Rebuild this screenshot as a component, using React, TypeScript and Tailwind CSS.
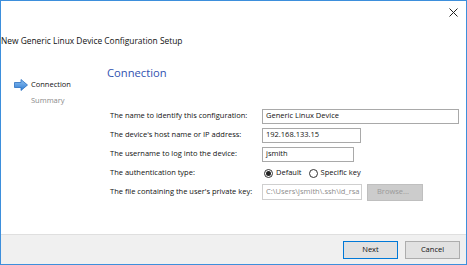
import React from 'react';

const font = { fontFamily: '"Open Sans", "Liberation Sans", sans-serif' };

const ArrowIcon: React.FC = () => (
  <svg width="14" height="12" viewBox="0 0 14 12" className="shrink-0">
    <defs>
      <linearGradient id="arr" x1="0" y1="0" x2="0" y2="1">
        <stop offset="0" stopColor="#8fc0f0" />
        <stop offset="1" stopColor="#2f7dd4" />
      </linearGradient>
    </defs>
    <path d="M0.5 3.5 H7 V0.5 L13.5 6 L7 11.5 V8.5 H0.5 Z" fill="url(#arr)" stroke="#2a6fc0" strokeWidth="0.8" />
  </svg>
);

const Radio: React.FC<{ checked?: boolean; label: string }> = ({ checked, label }) => (
  <div className="flex items-center gap-[3px]">
    <span className="w-[9px] h-[9px] rounded-full border border-[#333] flex items-center justify-center bg-white">
      {checked && <span className="w-[5px] h-[5px] rounded-full bg-[#222]" />}
    </span>
    <span>{label}</span>
  </div>
);

const Row: React.FC<{ label: string; children: React.ReactNode }> = ({ label, children }) => (
  <div className="flex items-center h-[16px]">
    <div className="w-[152px] shrink-0">{label}</div>
    {children}
  </div>
);

export default function App() {
  return (
    <div
      className="w-[467px] h-[265px] border border-[#3d8fdc] bg-white flex flex-col text-[7.5px] text-[#111] overflow-hidden"
      style={font}
    >
      <div className="h-[22px] flex justify-end items-center pr-[8px]">
        <svg width="9" height="9" viewBox="0 0 9 9">
          <path d="M0.5 0.5 L8.5 8.5 M8.5 0.5 L0.5 8.5" stroke="#222" strokeWidth="1" />
        </svg>
      </div>
      <div className="mt-[10px] h-[16px] flex items-center text-[8.4px]">New Generic Linux Device Configuration Setup</div>

      <div className="flex flex-1">
        <div className="w-[105px] shrink-0 pl-[13px] pt-[28px] flex flex-col">
          <div className="h-[16px] flex items-center gap-[3px]">
            <ArrowIcon />
            <span>Connection</span>
          </div>
          <div className="h-[16px] flex items-center pl-[17px] text-[#8a8a8a]">Summary</div>
        </div>

        <div className="flex-1 pt-[16px] pl-[1px]">
          <div className="h-[16px] flex items-center text-[11.2px] text-[#2f52b0]">Connection</div>
          <div className="mt-[27px] flex flex-col gap-[3px] pl-[3px]">
            <Row label="The name to identify this configuration:">
              <div className="w-[197px] h-[15px] border border-[#a9a9a9] px-[3px] flex items-center">Generic Linux Device</div>
            </Row>
            <Row label="The device's host name or IP address:">
              <div className="w-[99px] h-[15px] border border-[#a9a9a9] px-[3px] flex items-center">192.168.133.15</div>
            </Row>
            <Row label="The username to log into the device:">
              <div className="w-[92px] h-[15px] border border-[#a9a9a9] px-[3px] flex items-center">jsmith</div>
            </Row>
            <Row label="The authentication type:">
              <div className="flex items-center gap-[7px] pl-[2px]">
                <Radio checked label="Default" />
                <Radio label="Specific key" />
              </div>
            </Row>
            <Row label="The file containing the user's private key:">
              <div className="flex items-center gap-[5px]">
                <div className="w-[100px] h-[16px] border border-[#cfcfcf] px-[3px] flex items-center text-[#8c8c8c] overflow-hidden whitespace-nowrap">
                  C:\Users\jsmith\.ssh\id_rsa
                </div>
                <div className="w-[56px] h-[17px] bg-[#cccccc] border border-[#bfbfbf] flex items-center pl-[9px] text-[#9a9a9a]">
                  Browse...
                </div>
              </div>
            </Row>
          </div>
        </div>
      </div>

      <div className="h-[30px] border-t border-[#dfdfdf] bg-[#f0f0f0] flex justify-end items-center gap-[7px] pr-[6px]">
        <div className="w-[55px] h-[18px] bg-[#e1e1e1] border border-[#0078d7] flex items-center justify-center">Next</div>
        <div className="w-[55px] h-[18px] bg-[#e1e1e1] border border-[#adadad] flex items-center justify-center">Cancel</div>
      </div>
    </div>
  );
}
